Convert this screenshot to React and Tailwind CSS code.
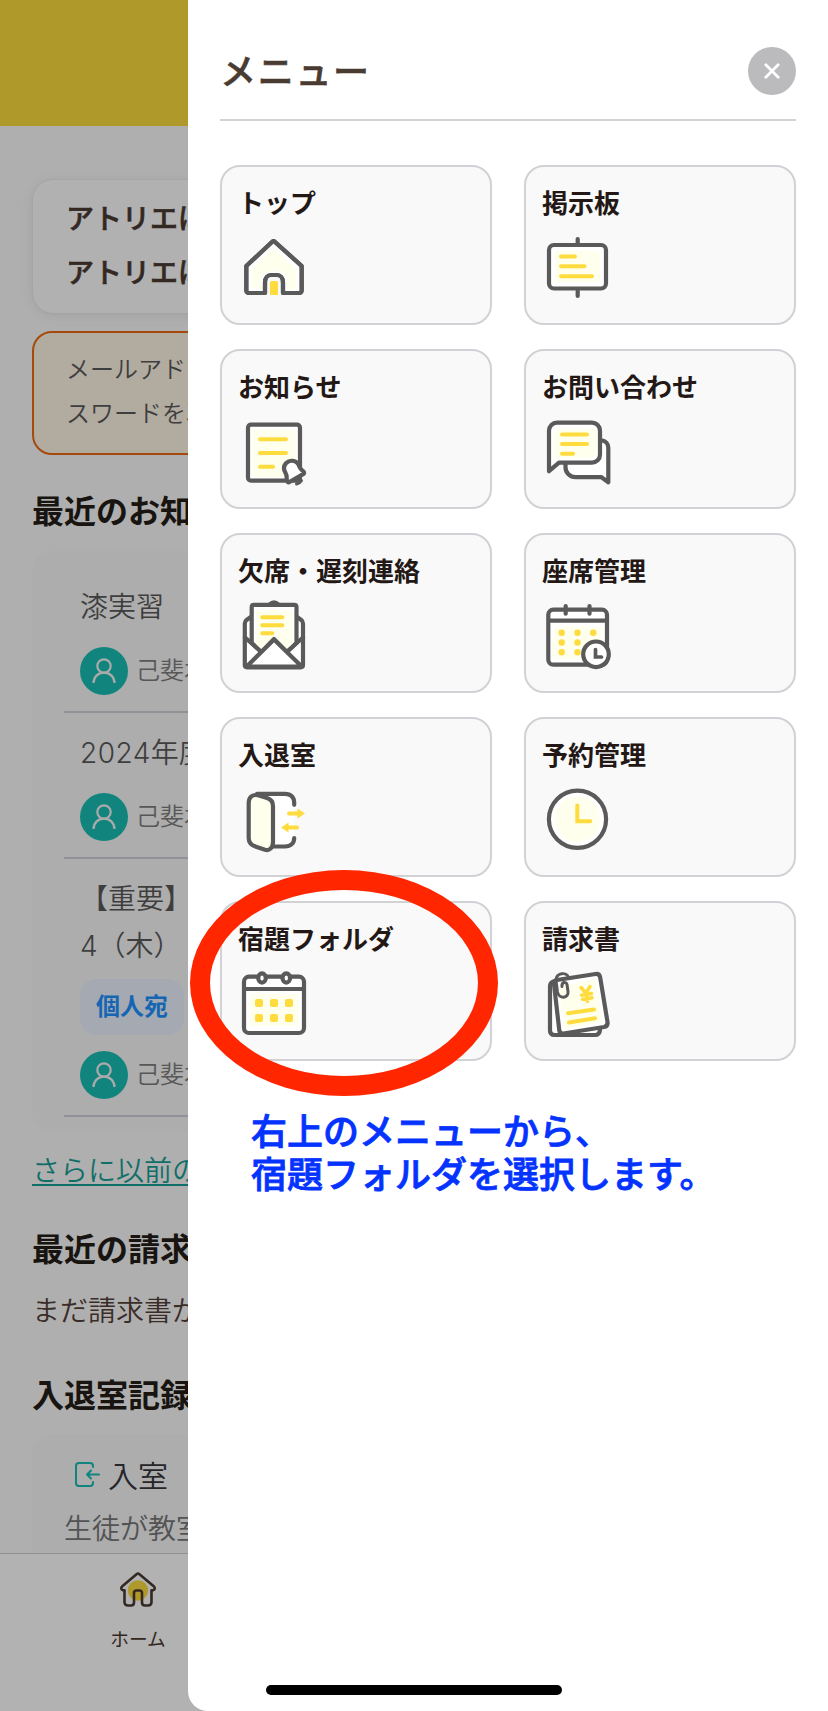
import React from 'react';

const GRAY = '#5a5a5a';
const YELLOW = '#fedc3d';
const PALE = '#feffec';

const stroke = { fill: 'none', stroke: GRAY, strokeWidth: 4.2, strokeLinecap: 'round', strokeLinejoin: 'round' };
const accent = { fill: 'none', stroke: YELLOW, strokeWidth: 4, strokeLinecap: 'round', strokeLinejoin: 'round' };

const TopIcon = () => (
  <>
    <path d="M8.3 35 34 11q1.5-1.4 3 0L63.7 35V59.5a2.5 2.5 0 0 1-2.5 2.5H45V51.5c0-5-3-7.5-6-7.5h-6c-3 0-6 2.5-6 7.5V62H10.8a2.5 2.5 0 0 1-2.5-2.5Z" {...stroke} fill="#fff" />
    <path d="M14 37.5 33.5 19.5q2-1.6 4 0L58 37.5V56q0 2.3-2.3 2.3H49V50q0-8-9-10h-8q-9 2-9 10v8.3H16.3Q14 58.3 14 56Z" fill={PALE} />
    <path d="M8.3 45V35L34 11q1.5-1.4 3 0L63.7 35V59.5a2.5 2.5 0 0 1-2.5 2.5H45V51.5c0-5-3-7.5-6-7.5h-6c-3 0-6 2.5-6 7.5V62H10.8a2.5 2.5 0 0 1-2.5-2.5Z" {...stroke} />
    <path d="M32 64V52q0-2 2-2h4q2 0 2 2v12Z" fill={YELLOW} />
  </>
);

const BoardIcon = () => (
  <>
    <path d="M35.7 8v5M35.7 60v5" {...stroke} />
    <rect x="7" y="14" width="57" height="43.5" rx="5" {...stroke} fill="#fff" />
    <rect x="13" y="20" width="45" height="31" rx="2" fill={PALE} />
    <path d="M19 25.5h14M19 35.3h23.5M19 45.2h31" {...accent} />
  </>
);

const NoticeIcon = () => (
  <g transform="translate(0 0.7)">
    <rect x="10" y="9" width="52" height="56" rx="3" {...stroke} fill="#fff" />
    <rect x="14.5" y="14" width="43" height="47" rx="2" fill={PALE} />
    <path d="M22 23.5h26M22 37.2h26M22 51h13" {...accent} />
    <path d="M58.5 68.3q3.5-.8 5-3.5" {...stroke} strokeWidth="3" />
    <path d="M51 66.5 65.5 58.2C66.8 57 65.5 55.5 64 54.5 61.5 52.5 61.5 50 59.5 47.5 56.5 44 51 44.5 48 47.5 45.5 50.5 45.5 54 47.5 57.2 49.5 60.5 48.2 62.5 49 65 49.5 66.5 50 66.8 51 66.5Z" {...stroke} fill="#fff" />
  </g>
);

const ContactIcon = () => (
  <g transform="translate(0 0.7)">
    <path d="M23.5 45v6.5a10 10 0 0 0 10 10H59.5l6.800 5V32c0-4-2.800-6.800-6.800-7.500" {...stroke} fill="#fff" />
    <path d="M7 55.5V15a8 8 0 0 1 8-8H50a8 8 0 0 1 8 8V39a8 8 0 0 1-8 8H17Z" {...stroke} fill="#fff" />
    <path d="M12 18q0-5 5-5H49.7q5 0 5 5V37q0 5-5 5H17q-5 0-5-5Z" fill={PALE} />
    <path d="M20 18.7h25M20 28.3h25M20 38h11" {...accent} />
  </g>
);

const AbsenceIcon = () => (
  <>
    <path d="M13.5 17.5 8.5 21q-1.7 1.2-1.7 3.5V66q0 2.3 2.3 2.3H62.7q2.3 0 2.3-2.3V24.5q0-2.3-1.7-3.5l-5-3.5" {...stroke} fill="#fff" />
    <path d="M31 5q5-5 10 0Z" {...stroke} strokeWidth="2.5" fill={GRAY} />
    <path d="M13.7 44V8q0-2.2 2.2-2.2H56.3q2.2 0 2.2 2.2V44L49 53 36 40 23.5 53Z" {...stroke} fill="#fff" />
    <path d="M18 14q0-3 3-3H51.5q3 0 3 3V45l-5 5.5L36 36.5 22.5 50.5 18 45Z" fill={PALE} />
    <path d="M7 38.5 23.5 53M65 38.5 48.5 53" {...stroke} />
    <path d="M8.7 67.5 36 40.5 63.7 67.5Z" {...stroke} fill="#fff" />
    <path d="M24.3 18.2h20M24.3 26.2h20M24.3 34.2h10" {...accent} />
  </>
);

const SeatIcon = () => (
  <>
    <rect x="6.3" y="10.7" width="58.7" height="55" rx="5" {...stroke} fill="#fff" />
    <rect x="11.5" y="28" width="48" height="32" rx="3" fill={PALE} />
    <path d="M6.3 21.7H65" {...stroke} strokeLinecap="butt" />
    <path d="M23.7 7v7.7M47.5 7v7.7" {...stroke} />
    {[33.7, 43.5, 53.3].map((cy) => (
      <React.Fragment key={cy}>
        <circle cx="19.7" cy={cy} r="3.2" fill={YELLOW} />
        <circle cx="35.5" cy={cy} r="3.2" fill={YELLOW} />
      </React.Fragment>
    ))}
    <circle cx="51.2" cy="33.7" r="3.2" fill={YELLOW} />
    <circle cx="54" cy="55.3" r="12.8" {...stroke} fill="#fff" />
    <path d="M53.5 50.5v7.5h6" {...stroke} strokeWidth="3.7" strokeLinejoin="miter" />
  </>
);

const EntryIcon = () => (
  <>
    <path d="M19 10.8H47c6 0 9.2 3.7 9.2 9V54.5c0 5-3.2 8.7-9.2 8.7H34" fill="#fff" />
    <path d="M19 10.8H47c6 0 9.2 3.7 9.2 9v2M56.2 55c0 4.8-3.2 8.5-9.2 8.5H35" {...stroke} />
    <path d="M10.7 20c0-6 4-9 9.3-7.7l9 2.7c4 1.2 6 3.5 6 8V59c0 6-3.5 9-8 7.7l-9-3c-5-1.5-7.3-4-7.3-8.7Z" {...stroke} fill={PALE} />
    <path d="M51 30.5h10M59 44.5H49" {...accent} />
    <path d="M59.5 25.5 67 30.5 59.5 35.5ZM50.5 39.5 43 44.5 50.5 49.5Z" fill={YELLOW} />
  </>
);

const ReserveIcon = () => (
  <>
    <circle cx="35.5" cy="36.3" r="28.6" {...stroke} fill="#fff" />
    <circle cx="35.5" cy="36.3" r="22.8" fill={PALE} />
    <path d="M35.3 22.5V38.2h13" {...accent} strokeLinejoin="miter" />
  </>
);

const HomeworkIcon = () => (
  <>
    <rect x="6" y="9.7" width="60" height="56.3" rx="5" {...stroke} fill="#fff" />
    <path d="M6 22H66" {...stroke} strokeLinecap="butt" />
    <rect x="12" y="27" width="48" height="32" rx="2" fill={PALE} />
    <ellipse cx="24" cy="11" rx="3.8" ry="4.6" {...stroke} fill="#fff" />
    <ellipse cx="48.3" cy="11" rx="3.8" ry="4.6" {...stroke} fill="#fff" />
    {[32, 47].map((y) => (
      <React.Fragment key={y}>
        <rect x="17" y={y} width="8" height="8" rx="2" fill={YELLOW} />
        <rect x="32" y={y} width="8" height="8" rx="2" fill={YELLOW} />
        <rect x="47" y={y} width="8" height="8" rx="2" fill={YELLOW} />
      </React.Fragment>
    ))}
  </>
);

const InvoiceIcon = () => (
  <>
    <path d="M11.5 14.5q-3.5 1-3.5 5V63.500q0 4.500 4.500 4.500H53q4.500 0 5-5" {...stroke} fill="#fff" />
    <path d="M12 17q-.5-3.500 3-4L53.5 7q4-.5 4.700 3.500L65.500 55q.6 4.200-3.500 5L21.500 66.500q-3.500.5-4.200-3Z" {...stroke} fill="#fff" />
    <path d="M17 22q-.3-3 2.500-3.500L51 12.500q2.500-.4 3 2.500L60.500 52q.4 2.800-2.500 3.500L25 61.500q-2.600.4-3-2.500Z" fill={PALE} />
    <path d="M39 20.500 43.800 26 48 19.500M43.800 26 45.500 34.500M39.500 28.300 49.500 26.500M40.500 32.300 50 30.700" {...accent} strokeWidth="3.500" />
    <path d="M26 46.300 52 42.500M27 55.500 53 51.300" {...accent} />
    <path d="M26.500 10.500C25 4.500 13.500 5.500 14 13.500L15.500 25c1.500 7.500 11.500 6.500 10.500-.500L25 17.500c-1-3.500-5.500-2.500-5 2" {...stroke} strokeWidth="3" />
  </>
);

const menuItems = [
  { label: 'トップ', Icon: TopIcon },
  { label: '掲示板', Icon: BoardIcon },
  { label: 'お知らせ', Icon: NoticeIcon },
  { label: 'お問い合わせ', Icon: ContactIcon },
  { label: '欠席・遅刻連絡', Icon: AbsenceIcon },
  { label: '座席管理', Icon: SeatIcon },
  { label: '入退室', Icon: EntryIcon },
  { label: '予約管理', Icon: ReserveIcon },
  { label: '宿題フォルダ', Icon: HomeworkIcon },
  { label: '請求書', Icon: InvoiceIcon },
];

const Author = () => (
  <div className="flex items-center gap-2">
    <div className="flex h-12 w-12 items-center justify-center rounded-full bg-[#17beb3]">
      <svg width="24" height="26" viewBox="0 0 24 26" fill="none" stroke="#f4f4f4" strokeWidth="2.2">
        <circle cx="12" cy="8" r="6.7" />
        <path d="M1.5 25C1.5 19 6 14.7 12 14.7S22.5 19 22.5 25" />
      </svg>
    </div>
    <span className="pb-1 text-2xl font-[350] text-[#7d7d7d]">己斐本</span>
  </div>
);

const Heading = ({ children, className }) => (
  <h2 className={`text-[32px] leading-[48px] font-bold text-[#251d17] ${className}`}>{children}</h2>
);

const HomePage = () => (
  <div className="flex flex-col whitespace-nowrap">
    <header className="h-[126px] bg-[#f9db3d]" />
    <main className="flex flex-col px-8">
      <div className="mt-[54px] ml-px h-[133px] rounded-[20px] bg-[#fefefe] pt-[10px] pl-[33px] text-[28px] leading-[54px] font-medium text-[#4a3b32] shadow-[0_0_2px_rgba(0,0,0,0.1),0_2px_14px_rgba(0,0,0,0.08)] [-webkit-text-stroke:0.6px]">
        <p>アトリエは</p>
        <p>アトリエは</p>
      </div>

      <div className="mt-[18px] h-[124px] rounded-[20px] border-2 border-[#ec6a12] bg-[#fff5e6] pt-[13px] pl-8 text-2xl leading-[44px] font-[350] text-[#5a5a5a]">
        <p>メールアド</p>
        <p>スワードを次</p>
      </div>

      <Heading className="mt-[30px]">最近のお知らせ</Heading>
      <ul className="mt-[18px] rounded-[20px] bg-[#f8f8f8] pt-4 pb-[15px] pl-8 text-[28px] leading-[46px] font-[350] text-[#5a5a5a]">
        <li className="border-b-2 border-[#d0d0d8] pt-[15px] pb-4 pl-4">
          <p className="mb-[19px] h-[46px]">漆実習</p>
          <Author />
        </li>
        <li className="border-b-2 border-[#d0d0d8] pt-[15px] pb-4 pl-4">
          <p className="mb-[19px] h-[46px]"><span className="font-[Inter] font-light tracking-[0.5px]">2024</span>年度</p>
          <Author />
        </li>
        <li className="border-b-2 border-[#d0d0d8] pt-[15px] pb-4 pl-4">
          <p className="h-[47px] leading-[47px]">【重要】</p>
          <p className="h-12 leading-[47px]"><span className="font-[Inter] font-light">4</span>（木）</p>
          <div className="mt-[10px] mb-4 flex h-14 w-[104px] items-center justify-center rounded-2xl bg-[#edf4ff] pb-[4px] text-2xl font-bold text-[#1e92ff]">
            個人宛
          </div>
          <Author />
        </li>
      </ul>
      <a className="mt-[14px] text-[28px] leading-[46px] font-[350] text-[#17a096] underline decoration-2 underline-offset-[3px]">
        さらに以前のお知らせ
      </a>

      <Heading className="mt-[31px]">最近の請求書</Heading>
      <p className="mt-[15px] text-[28px] leading-[46px] font-[350] text-[#53413a]">まだ請求書がありません</p>

      <Heading className="mt-[37px]">入退室記録</Heading>
      <div className="mt-[17px] h-[200px] rounded-[20px] bg-[#f8f8f8] pt-[17px] pl-8">
        <div className="flex items-center gap-2 pl-[11px] text-[30px] leading-[46px] font-[350] text-[#36363d]">
          <svg width="25" height="25" viewBox="0 0 25 25" fill="none" stroke="#17beb3" strokeWidth="2" strokeLinecap="round" strokeLinejoin="round">
            <path d="M18 5V4q0-3-3-3H4Q1 1 1 4V21q0 3 3 3H15q3 0 3-3V20M24 12.5H12M16 8.5 12 12.5 16 16.5" />
          </svg>
          <span>入室</span>
        </div>
        <p className="mt-[7px] text-[28px] leading-[46px] font-[350] text-[#777]">生徒が教室に</p>
      </div>
    </main>
  </div>
);

const TabBar = () => (
  <nav className="absolute inset-x-0 bottom-0 h-[158px] border-t border-[#d0d0d0] bg-white">
    <div className="flex w-[276px] flex-col items-center pt-[17px]">
      <svg width="38" height="38" viewBox="0 0 38 38">
        <circle cx="19" cy="19.5" r="10.2" fill="#f9db3d" />
        <path
          d="M17.5 3.3q1.5-1.2 3 0L35 15.5q2 2.700-1 3.700H32.500V31q0 3.500-3.500 3.500H26q-3 0-3-3V22q0-2.500-2.500-2.500h-3Q15 19.500 15 22v9.500q0 3-3 3H9q-3.500 0-3.500-3.500V19.200H4q-3-1-1-3.700Z"
          fill="none"
          stroke="#4a3b32"
          strokeWidth="2.6"
          strokeLinejoin="round"
        />
      </svg>
      <span className="mt-[13px] text-[18.7px] leading-8 text-[#4a382d]">ホーム</span>
    </div>
  </nav>
);

const MenuPanel = () => (
  <aside className="absolute inset-y-0 right-0 w-[640px] rounded-bl-[20px] bg-white px-8">
    <div className="flex items-center justify-between border-b-2 border-[#d1d1d6] pt-[47px] pb-6">
      <h1 className="pb-[3px] text-[36px] leading-[45px] font-medium tracking-[1.7px] text-[#4a3b32] [-webkit-text-stroke:0.6px]">メニュー</h1>
      <button className="flex h-12 w-12 items-center justify-center rounded-full bg-[#bbbbbd]">
        <svg width="16" height="16" viewBox="0 0 16 16" stroke="#fff" strokeWidth="2.8" strokeLinecap="round">
          <path d="M1.8 1.8 14.2 14.2M14.2 1.8 1.8 14.2" />
        </svg>
      </button>
    </div>

    <div className="mt-11 grid grid-cols-2 gap-x-8 gap-y-6">
      {menuItems.map(({ label, Icon }) => (
        <div key={label} className="h-40 rounded-[20px] border-2 border-[#d1d1d6] bg-[#f9f9f9] pt-[15px] pl-4">
          <p className="text-[26px] leading-10 font-bold text-[#231815]">{label}</p>
          <svg className="mt-[9px]" width="72" height="72" viewBox="0 0 72 72">
            <Icon />
          </svg>
        </div>
      ))}
    </div>

    <p className="mt-[47px] ml-[31px] text-[36px] leading-[43px] font-medium whitespace-nowrap text-[#0433ff] [-webkit-text-stroke:0.8px]">
      右上のメニューから、
      <br />
      宿題フォルダを選択します。
    </p>
  </aside>
);

const App = () => {
  return (
    <div className="relative h-[1711px] w-[828px] overflow-hidden bg-[#fbfbfb] font-['Noto_Sans_CJK_JP',sans-serif]" lang="ja">
      <HomePage />
      <TabBar />
      <div className="absolute inset-0 bg-black/30" />
      <MenuPanel />

      {/* Highlight on the homework folder */}
      <div className="absolute top-[870px] left-[190px] h-[226px] w-[308px] rounded-[50%] border-[20px] border-[#ff2600]" />
      {/* Home indicator */}
      <div className="absolute bottom-4 left-[266px] h-[10px] w-[296px] rounded-full bg-black" />
    </div>
  );
};

export default App;
